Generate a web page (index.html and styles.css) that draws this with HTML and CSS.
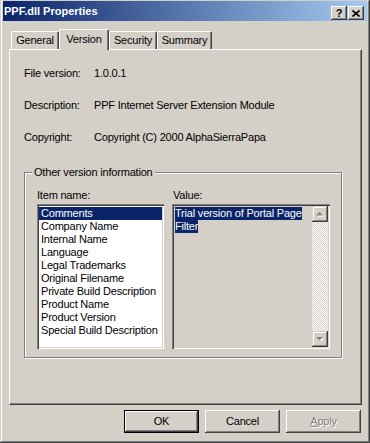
FILE: index.html
```html
<!DOCTYPE html>
<html lang="en">
<head>
    <meta charset="UTF-8">
    <title>PPF.dll Properties</title>
    <link rel="stylesheet" href="styles.css">
</head>
<body>
    <div class="window">
        <div class="titlebar">
            <span class="title">PPF.dll Properties</span>
            <div class="cap-btn help">?</div>
            <div class="cap-btn close">
                <svg width="8" height="7" viewBox="0 0 8 7">
                    <path d="M0.5 0.5 L7.5 6.5 M7.5 0.5 L0.5 6.5" stroke="#000" stroke-width="1.6" fill="none"></path>
                </svg>
            </div>
        </div>

        <div class="dialog-body">
            <div class="tabs">
                <div class="tab tab-general">General</div>
                <div class="tab tab-version active">Version</div>
                <div class="tab tab-security">Security</div>
                <div class="tab tab-summary">Summary</div>
            </div>

            <div class="panel">
                <div class="info-row">
                    <span class="info-label">File version:</span>
                    <span>1.0.0.1</span>
                </div>
                <div class="info-row">
                    <span class="info-label">Description:</span>
                    <span>PPF Internet Server Extension Module</span>
                </div>
                <div class="info-row">
                    <span class="info-label">Copyright:</span>
                    <span>Copyright (C) 2000 AlphaSierraPapa</span>
                </div>

                <div class="group">
                    <span class="legend">Other version information</span>
                    <div class="lists">
                        <div class="col">
                            <div class="col-label">Item name:</div>
                            <ul class="listbox">
                                <li class="selected">Comments</li>
                                <li>Company Name</li>
                                <li>Internal Name</li>
                                <li>Language</li>
                                <li>Legal Trademarks</li>
                                <li>Original Filename</li>
                                <li>Private Build Description</li>
                                <li>Product Name</li>
                                <li>Product Version</li>
                                <li>Special Build Description</li>
                            </ul>
                        </div>
                        <div class="col">
                            <div class="col-label value-label">Value:</div>
                            <div class="valuebox">
                                <div class="value-text">
                                    <span class="sel">Trial version of Portal Page</span>
                                    <span class="sel">Filter</span>
                                </div>
                                <div class="scrollbar">
                                    <div class="scroll-btn">
                                        <svg width="8" height="5" viewBox="0 0 8 5">
                                            <polygon points="4.5,1 8,4.5 1,4.5" fill="#fff"></polygon>
                                            <polygon points="3.5,0 7,3.5 0,3.5" fill="#808080"></polygon>
                                        </svg>
                                    </div>
                                    <div class="scroll-track"></div>
                                    <div class="scroll-btn">
                                        <svg width="8" height="5" viewBox="0 0 8 5">
                                            <polygon points="1,1 8,1 4.5,4.5" fill="#fff"></polygon>
                                            <polygon points="0,0 7,0 3.5,3.5" fill="#808080"></polygon>
                                        </svg>
                                    </div>
                                </div>
                            </div>
                        </div>
                    </div>
                </div>
            </div>

            <div class="actions">
                <div class="btn default">OK</div>
                <div class="btn">Cancel</div>
                <div class="btn disabled"><u>A</u>pply</div>
            </div>
        </div>
    </div>
</body>
</html>
```

FILE: styles.css
```css
/* Win2000 style properties dialog */
* {
    box-sizing: border-box;
}

body {
    margin: 0;
    font-family: "Liberation Sans", Arial, sans-serif;
    font-size: 11px;
    letter-spacing: -0.2px;
    color: #000;
}

.window {
    width: 370px;
    height: 443px;
    background-color: #d4d0c8;
    padding: 1px 3px 3px 3px;
    box-shadow: inset -1px -1px #404040, inset 1px 1px #d4d0c8,
                inset -2px -2px #808080, inset 2px 2px #fff;
    display: flex;
    flex-direction: column;
}

/* title bar */
.titlebar {
    height: 20px;
    display: flex;
    align-items: center;
    padding: 0 3px 0 1px;
    background: linear-gradient(to right, #0a246a, #a6caf0);
    color: #fff;
    font-weight: bold;
    letter-spacing: 0;
}

.title {
    flex: 1;
}

.cap-btn {
    width: 16px;
    height: 14px;
    margin-top: 4px;
    background-color: #d4d0c8;
    box-shadow: inset -1px -1px #404040, inset 1px 1px #fff, inset -2px -2px #808080;
    display: flex;
    align-items: center;
    justify-content: center;
    color: #000;
    font-size: 11px;
    line-height: 14px;
}

.cap-btn.close {
    margin-left: 1px;
}

/* tabs */
.dialog-body {
    flex: 1;
    padding: 8px 5px 0 6px;
    display: flex;
    flex-direction: column;
}

.tabs {
    display: flex;
    align-items: flex-end;
    height: 20px;
    padding-left: 2px;
    position: relative;
    z-index: 1;
}

.tab {
    height: 18px;
    border-top: 1px solid #fff;
    border-left: 1px solid #fff;
    border-right: 1px solid #404040;
    border-radius: 2px 2px 0 0;
    box-shadow: inset -1px 0 #808080;
    text-align: center;
    line-height: 17px;
}

.tab-general { width: 48px; }
.tab-version { width: 50px; }
.tab-security { width: 48px; }
.tab-summary { width: 55px; }

.tab.active {
    height: 21px;
    margin-bottom: -1px;
    background-color: #d4d0c8;
    line-height: 18px;
}

/* tab page */
.panel {
    width: 353px;
    height: 356px;
    border-top: 1px solid #fff;
    border-left: 1px solid #fff;
    border-right: 1px solid #404040;
    border-bottom: 1px solid #404040;
    box-shadow: inset -1px -1px #808080;
    padding: 17px 0 0 14px;
}

.info-row {
    display: flex;
    height: 13px;
    line-height: 13px;
}

.info-row + .info-row {
    margin-top: 19px;
}

.info-label {
    width: 70px;
}

/* group box */
.group {
    position: relative;
    width: 318px;
    height: 186px;
    margin-top: 28px;
    border: 1px solid #808080;
    box-shadow: inset 1px 1px #fff, 1px 1px #fff;
    padding: 16px 11px 0 12px;
}

.legend {
    position: absolute;
    top: -7px;
    left: 7px;
    padding: 0 2px;
    line-height: 13px;
    background-color: #d4d0c8;
}

.lists {
    display: flex;
    gap: 8px;
}

.col-label {
    height: 13px;
    line-height: 13px;
    margin-bottom: 2px;
}

.value-label {
    padding-left: 1px;
}

.listbox {
    list-style: none;
    margin: 0;
    width: 127px;
    height: 145px;
    padding: 3px 2px 2px 2px;
    background-color: #fff;
    box-shadow: inset 1px 1px #808080, inset 2px 2px #404040,
                inset -1px -1px #fff, inset -2px -2px #d4d0c8;
}

.listbox li {
    height: 13px;
    line-height: 13px;
    padding-left: 2px;
    white-space: nowrap;
}

.listbox li.selected {
    background-color: #0a246a;
    color: #fff;
}

.valuebox {
    width: 158px;
    height: 145px;
    padding: 2px;
    display: flex;
    box-shadow: inset 1px 1px #808080, inset 2px 2px #404040,
                inset -1px -1px #fff, inset -2px -2px #d4d0c8;
}

.value-text {
    flex: 1;
    padding: 1px 0 0 1px;
    line-height: 13px;
}

.value-text .sel {
    display: block;
    width: fit-content;
    background-color: #0a246a;
    color: #fff;
    white-space: nowrap;
}

.scrollbar {
    width: 16px;
    display: flex;
    flex-direction: column;
}

.scroll-btn {
    width: 16px;
    height: 16px;
    background-color: #d4d0c8;
    box-shadow: inset -1px -1px #404040, inset 1px 1px #d4d0c8,
                inset -2px -2px #808080, inset 2px 2px #fff;
    display: flex;
    align-items: center;
    justify-content: center;
}

.scroll-track {
    flex: 1;
    background: repeating-conic-gradient(#fff 0 25%, #d4d0c8 0 50%) 0 0 / 2px 2px;
}

/* buttons */
.actions {
    display: flex;
    justify-content: flex-end;
    gap: 6px;
    margin-top: 5px;
    margin-right: 1px;
}

.btn {
    width: 75px;
    height: 23px;
    line-height: 23px;
    text-align: center;
    box-shadow: inset -1px -1px #404040, inset 1px 1px #fff, inset -2px -2px #808080;
}

.btn.default {
    border: 1px solid #000;
    line-height: 21px;
    box-shadow: inset -1px -1px #404040, inset 1px 1px #fff, inset -2px -2px #808080;
}

.btn.disabled {
    color: #808080;
    text-shadow: 1px 1px #fff;
}
```
